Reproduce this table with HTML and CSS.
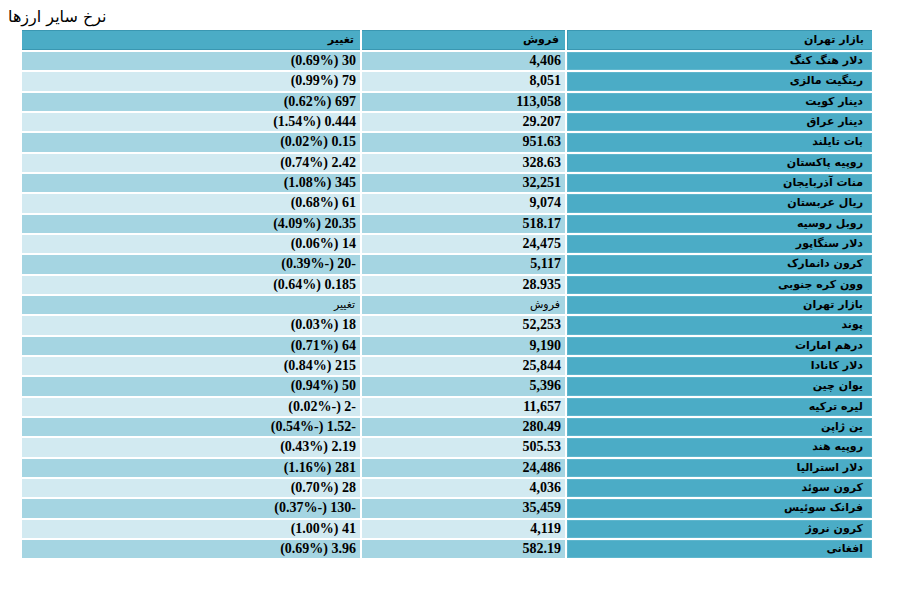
FILE: index.html
```html
<!DOCTYPE html>
<html lang="fa">
<head>
<meta charset="utf-8">
<title>نرخ سایر ارزها</title>
<link rel="stylesheet" href="styles.css">
</head>
<body>
<div class="page">
  <h1 class="title">نرخ سایر ارزها</h1>
  <table class="rates" dir="rtl">
    <colgroup>
      <col class="c-name"><col class="c-sell"><col class="c-change">
    </colgroup>
    <thead>
      <tr class="head">
        <th class="name">بازار تهران</th>
        <th class="val">فروش</th>
        <th class="val">تغییر</th>
      </tr>
    </thead>
    <tbody>
      <tr><td class="name">دلار هنگ کنگ</td><td class="num">4,406</td><td class="num">30 (0.69%)</td></tr>
      <tr><td class="name">رینگیت مالزی</td><td class="num">8,051</td><td class="num">79 (0.99%)</td></tr>
      <tr><td class="name">دینار کویت</td><td class="num">113,058</td><td class="num">697 (0.62%)</td></tr>
      <tr><td class="name">دینار عراق</td><td class="num">29.207</td><td class="num">0.444 (1.54%)</td></tr>
      <tr><td class="name">بات تایلند</td><td class="num">951.63</td><td class="num">0.15 (0.02%)</td></tr>
      <tr><td class="name">روپیه پاکستان</td><td class="num">328.63</td><td class="num">2.42 (0.74%)</td></tr>
      <tr><td class="name">منات آذربایجان</td><td class="num">32,251</td><td class="num">345 (1.08%)</td></tr>
      <tr><td class="name">ریال عربستان</td><td class="num">9,074</td><td class="num">61 (0.68%)</td></tr>
      <tr><td class="name">روبل روسیه</td><td class="num">518.17</td><td class="num">20.35 (4.09%)</td></tr>
      <tr><td class="name">دلار سنگاپور</td><td class="num">24,475</td><td class="num">14 (0.06%)</td></tr>
      <tr><td class="name">کرون دانمارک</td><td class="num">5,117</td><td class="num">-20 (-0.39%)</td></tr>
      <tr><td class="name">وون کره جنوبی</td><td class="num">28.935</td><td class="num">0.185 (0.64%)</td></tr>
      <tr class="subhead"><td class="name">بازار تهران</td><td class="sub">فروش</td><td class="sub">تغییر</td></tr>
      <tr><td class="name">پوند</td><td class="num">52,253</td><td class="num">18 (0.03%)</td></tr>
      <tr><td class="name">درهم امارات</td><td class="num">9,190</td><td class="num">64 (0.71%)</td></tr>
      <tr><td class="name">دلار کانادا</td><td class="num">25,844</td><td class="num">215 (0.84%)</td></tr>
      <tr><td class="name">یوان چین</td><td class="num">5,396</td><td class="num">50 (0.94%)</td></tr>
      <tr><td class="name">لیره ترکیه</td><td class="num">11,657</td><td class="num">-2 (-0.02%)</td></tr>
      <tr><td class="name">ین ژاپن</td><td class="num">280.49</td><td class="num">-1.52 (-0.54%)</td></tr>
      <tr><td class="name">روپیه هند</td><td class="num">505.53</td><td class="num">2.19 (0.43%)</td></tr>
      <tr><td class="name">دلار استرالیا</td><td class="num">24,486</td><td class="num">281 (1.16%)</td></tr>
      <tr><td class="name">کرون سوئد</td><td class="num">4,036</td><td class="num">28 (0.70%)</td></tr>
      <tr><td class="name">فرانک سوئیس</td><td class="num">35,459</td><td class="num">-130 (-0.37%)</td></tr>
      <tr><td class="name">کرون نروژ</td><td class="num">4,119</td><td class="num">41 (1.00%)</td></tr>
      <tr><td class="name">افغانی</td><td class="num">582.19</td><td class="num">3.96 (0.69%)</td></tr>
    </tbody>
  </table>
</div>
</body>
</html>
```

FILE: styles.css
```css
html, body {
  margin: 0;
  padding: 0;
  background: #ffffff;
}

body {
  padding: 8px;
  font-family: "DejaVu Sans", sans-serif;
  color: #000;
}

.page {
  width: 880px;
}

.title {
  margin: 0;
  font-family: "DejaVu Sans", sans-serif;
  font-weight: normal;
  font-size: 16px;
  line-height: 17px;
  height: 17px;
  text-align: left;
}

.rates {
  margin: 3px 0 0 12px;
  width: 854px;
  border-collapse: separate;
  border-spacing: 2px;
  table-layout: fixed;
}

.c-name { width: 305px; }
.c-sell { width: 203px; }
.c-change { width: 338px; }

.rates th,
.rates td {
  height: 18.33px;
  padding: 0 6px 0 6px;
  text-align: right;
  vertical-align: middle;
  line-height: 16px;
  white-space: nowrap;
  box-sizing: border-box;
}

.rates th {
  height: 20px;
  background: #4bacc6;
  border-top: 1px solid #3a97b2;
  border-bottom: 1px solid #3a97b2;
  font-family: "DejaVu Sans", sans-serif;
  font-size: 11px;
  font-weight: bold;
}

.rates th.name {
  border-left: 1px solid #3a97b2;
  padding-right: 8px;
}

.rates td.name {
  background: #4bacc6;
  border: 1px solid #5fb6cd;
  font-family: "DejaVu Sans", sans-serif;
  font-size: 11px;
  font-weight: bold;
  padding-right: 8px;
}

.rates td.num {
  font-family: "Liberation Serif", "DejaVu Sans", serif;
  font-size: 14px;
  font-weight: bold;
  padding-right: 4px;
}

.rates td.sub {
  font-family: "DejaVu Sans", sans-serif;
  font-size: 11px;
  font-weight: normal;
  padding-right: 5px;
}

.rates tbody tr:nth-child(odd) td.num,
.rates tbody tr:nth-child(odd) td.sub {
  background: #a5d5e2;
}

.rates tbody tr:nth-child(even) td.num,
.rates tbody tr:nth-child(even) td.sub {
  background: #d2eaf1;
}
```
